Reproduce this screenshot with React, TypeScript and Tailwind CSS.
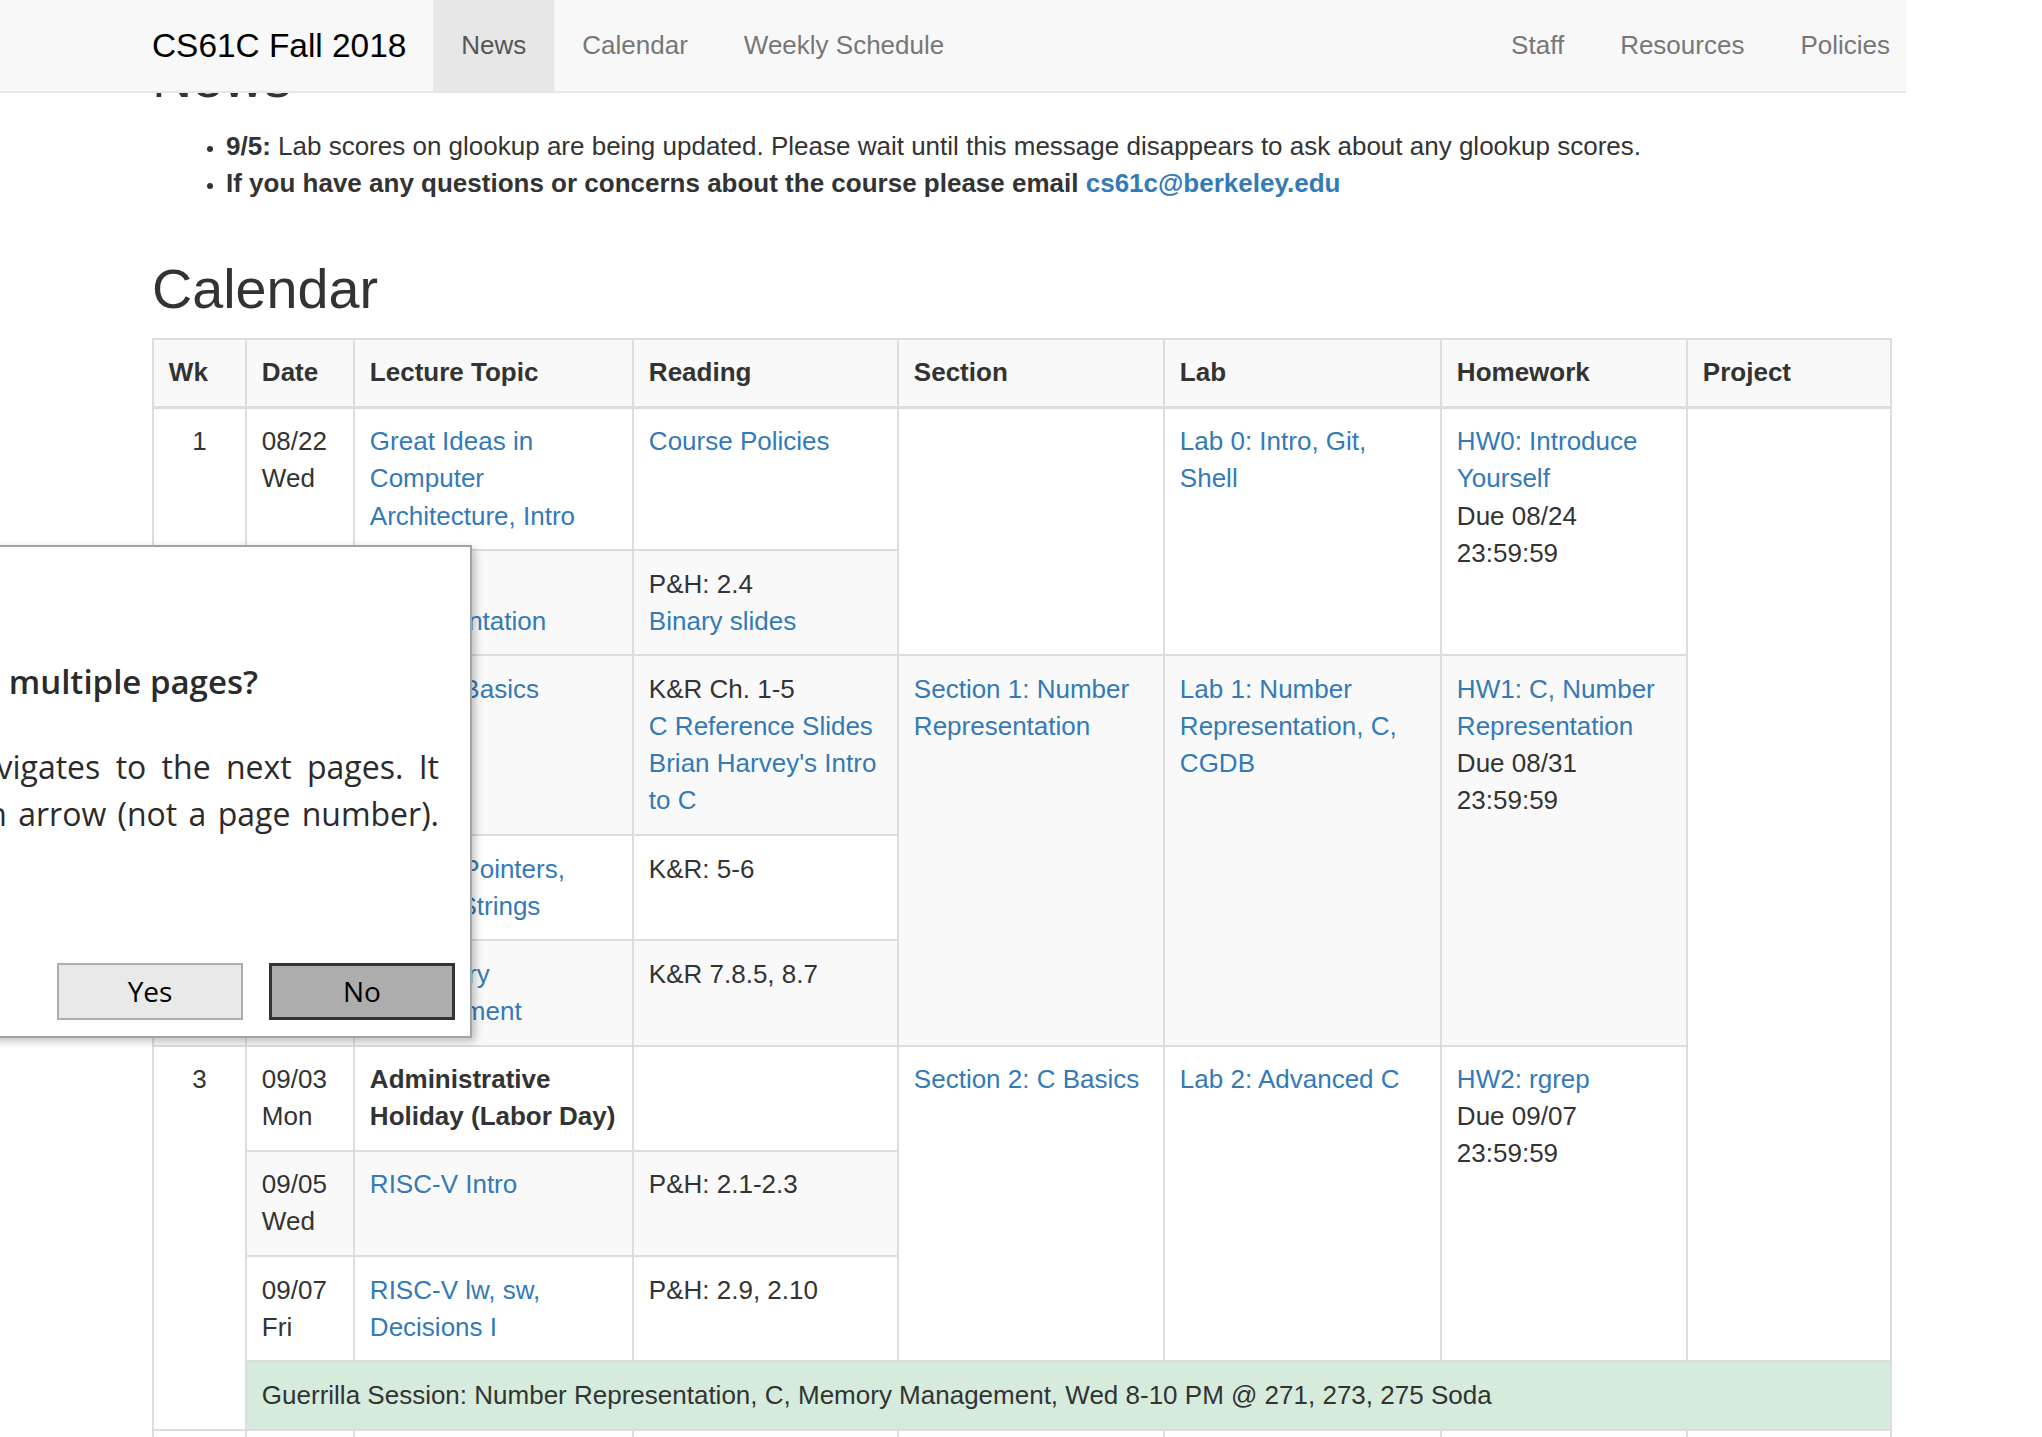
import React from "react";

const linkCls = "text-[#337ab7]";
const cellCls = "border-2 border-[#ddd] px-[14.86px] py-[14.5px] align-top";
const stripe = "bg-[#f9f9f9]";

const NavItem = ({ children, active }: { children: React.ReactNode; active?: boolean }) => {
  return (
    <li
      className={
        active
          ? "flex items-center bg-[#e7e7e7] px-[28px] text-[#555]"
          : "flex items-center px-[28px] text-[#777]"
      }
    >
      {children}
    </li>
  );
};

const Navbar = () => {
  return (
    <nav className="relative z-10 flex h-[93px] w-[1906px] items-stretch overflow-hidden border-b-2 border-[#e7e7e7] bg-[#f8f8f8] text-[26px]">
      <a className="flex items-center pl-[152px] pr-[27px] text-[33.4px] text-black">CS61C Fall 2018</a>
      <ul className="flex">
        <NavItem active>News</NavItem>
        <NavItem>Calendar</NavItem>
        <NavItem>Weekly Schedule</NavItem>
      </ul>
      <ul className="ml-auto -mr-[12px] flex">
        <NavItem>Staff</NavItem>
        <NavItem>Resources</NavItem>
        <NavItem>Policies</NavItem>
      </ul>
    </nav>
  );
};

const A = ({ children }: { children: React.ReactNode }) => <a className={linkCls}>{children}</a>;

const CalendarTable = () => {
  return (
    <table className="w-[1738px] table-fixed border-collapse">
      <colgroup>
        <col className="w-[93px]" />
        <col className="w-[108px]" />
        <col className="w-[279px]" />
        <col className="w-[265px]" />
        <col className="w-[266px]" />
        <col className="w-[277px]" />
        <col className="w-[246px]" />
        <col className="w-[204px]" />
      </colgroup>
      <thead>
        <tr className={stripe}>
          {["Wk", "Date", "Lecture Topic", "Reading", "Section", "Lab", "Homework", "Project"].map((h) => (
            <th
              key={h}
              className="border-2 border-b-[3px] border-[#ddd] px-[14.86px] py-[14.3px] text-left align-bottom font-bold"
            >
              {h}
            </th>
          ))}
        </tr>
      </thead>
      <tbody>
        {/* week 1 */}
        <tr>
          <td rowSpan={2} className={`${cellCls} text-center`}>1</td>
          <td className={cellCls}>08/22 Wed</td>
          <td className={cellCls}><A>Great Ideas in Computer Architecture, Intro</A></td>
          <td className={cellCls}><A>Course Policies</A></td>
          <td rowSpan={2} className={cellCls}></td>
          <td rowSpan={2} className={cellCls}><A>Lab 0: Intro, Git, Shell</A></td>
          <td rowSpan={2} className={cellCls}>
            <A>HW0: Introduce Yourself</A>
            <br />
            Due 08/24 23:59:59
          </td>
          <td rowSpan={8} className={cellCls}></td>
        </tr>
        <tr className={stripe}>
          <td className={cellCls}>08/24 Fri</td>
          <td className={cellCls}><A>Number Representation</A></td>
          <td className={cellCls}>
            P&amp;H: 2.4
            <br />
            <A>Binary slides</A>
          </td>
        </tr>

        {/* week 2 */}
        <tr className={stripe}>
          <td rowSpan={3} className={`${cellCls} text-center`}>2</td>
          <td className={cellCls}>08/27 Mon</td>
          <td className={cellCls}><A>C Intro: Basics</A></td>
          <td className={cellCls}>
            K&amp;R Ch. 1-5
            <br />
            <A>C Reference Slides</A>
            <br />
            <A>Brian Harvey's Intro to C</A>
          </td>
          <td rowSpan={3} className={cellCls}><A>Section 1: Number Representation</A></td>
          <td rowSpan={3} className={cellCls}><A>Lab 1: Number Representation, C, CGDB</A></td>
          <td rowSpan={3} className={cellCls}>
            <A>HW1: C, Number Representation</A>
            <br />
            Due 08/31 23:59:59
          </td>
        </tr>
        <tr>
          <td className={cellCls}>08/29 Wed</td>
          <td className={cellCls}><A>C Intro: Pointers, Arrays, Strings</A></td>
          <td className={cellCls}>K&amp;R: 5-6</td>
        </tr>
        <tr className={stripe}>
          <td className={cellCls}>08/31 Fri</td>
          <td className={cellCls}><A>C Memory Management</A></td>
          <td className={cellCls}>K&amp;R 7.8.5, 8.7</td>
        </tr>

        {/* week 3 */}
        <tr>
          <td rowSpan={4} className={`${cellCls} text-center`}>3</td>
          <td className={cellCls}>09/03 Mon</td>
          <td className={`${cellCls} font-bold`}>Administrative Holiday (Labor Day)</td>
          <td className={cellCls}></td>
          <td rowSpan={3} className={cellCls}><A>Section 2: C Basics</A></td>
          <td rowSpan={3} className={cellCls}><A>Lab 2: Advanced C</A></td>
          <td rowSpan={3} className={cellCls}>
            <A>HW2: rgrep</A>
            <br />
            Due 09/07 23:59:59
          </td>
        </tr>
        <tr className={stripe}>
          <td className={cellCls}>09/05 Wed</td>
          <td className={cellCls}><A>RISC-V Intro</A></td>
          <td className={cellCls}>P&amp;H: 2.1-2.3</td>
        </tr>
        <tr>
          <td className={cellCls}>09/07 Fri</td>
          <td className={cellCls}><A>RISC-V lw, sw, Decisions I</A></td>
          <td className={cellCls}>P&amp;H: 2.9, 2.10</td>
        </tr>
        <tr>
          <td colSpan={7} className={`${cellCls} bg-[#d5ebdc]`}>
            Guerrilla Session: Number Representation, C, Memory Management, Wed 8-10 PM @ 271, 273, 275 Soda
          </td>
        </tr>

        {/* week 4 */}
        <tr>
          <td className={`${cellCls} text-center`}>4</td>
          <td className={cellCls}>09/10 Mon</td>
          <td className={cellCls}><A>RISC-V Decisions II</A></td>
          <td className={cellCls}>P&amp;H: 2.7, 2.10</td>
          <td className={cellCls}><A>Section 3: RISC-V</A></td>
          <td className={cellCls}><A>Lab 3: RISC-V, Venus</A></td>
          <td className={cellCls}><A>HW3: RISC-V</A></td>
          <td className={cellCls}><A>Proj 1: philphix</A></td>
        </tr>
      </tbody>
    </table>
  );
};

const PagesDialog = () => {
  return (
    <div className="absolute left-[-600px] top-[545px] z-20 flex h-[493px] w-[1072px] flex-col border-2 border-[#a3a3a3] bg-white font-['Open_Sans',sans-serif] text-[#2b2b2b] shadow-[3px_3px_8px_rgba(0,0,0,0.25)]">
      <h3 className="mt-[113px] pr-[212px] text-right text-[33px] font-semibold leading-[44px]">
        Does this document have multiple pages?
      </h3>
      <p className="mt-[39px] pr-[31px] text-right text-[32px] leading-[47px]">
        <span className="block whitespace-nowrap [word-spacing:7px]">
          Click the button that navigates to the next pages. It
        </span>
        <span className="block whitespace-nowrap [word-spacing:3px]">should be an arrow (not a page number).</span>
      </p>
      <div className="mt-auto mb-[16px] flex justify-end gap-[26px] pr-[15px]">
        <button className="h-[57px] w-[186px] border-2 border-[#adadad] bg-[#e9e9e9] text-[28px] text-black">
          Yes
        </button>
        <button className="h-[57px] w-[186px] border-[3px] border-[#333] bg-[#adadad] text-[28px] text-black">
          No
        </button>
      </div>
    </div>
  );
};

export default function App() {
  return (
    <div className="relative h-[1437px] w-full overflow-hidden bg-white font-['Liberation_Sans',Arial,sans-serif] text-[26px] leading-[1.42857] text-[#333]">
      <Navbar />
      <main className="-mt-[45px] w-[1890px] pl-[152px]">
        <h2 className="mb-[18.6px] text-[55.7px] leading-[1.1]">News</h2>
        <ul className="list-disc pl-[74px] marker:text-[20px]">
          <li>
            <b>9/5:</b> Lab scores on glookup are being updated. Please wait until this message disappears to ask
            about any glookup scores.
          </li>
          <li>
            <b>
              If you have any questions or concerns about the course please email{" "}
              <a className={linkCls}>cs61c@berkeley.edu</a>
            </b>
          </li>
        </ul>
        <h2 className="mt-[57px] mb-[17.6px] text-[55.7px] leading-[1.1]">Calendar</h2>
        <CalendarTable />
      </main>
      <PagesDialog />
    </div>
  );
}
